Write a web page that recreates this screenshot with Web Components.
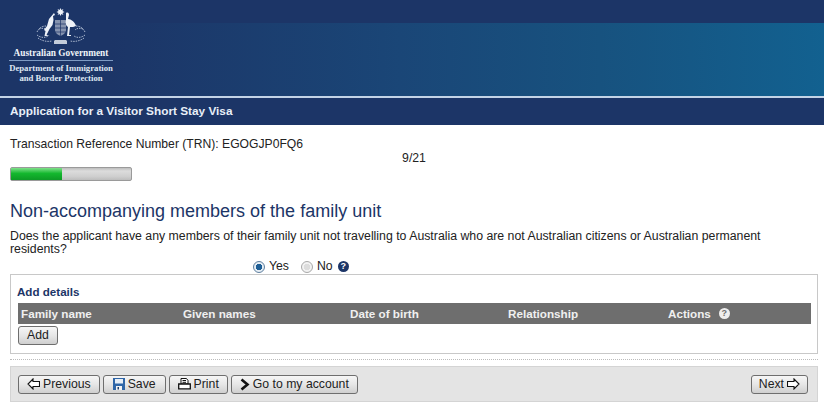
<!DOCTYPE html>
<html lang="en">
<head>
<meta charset="utf-8">
<title>Application for a Visitor Short Stay Visa</title>
<style>
  html, body { margin: 0; background: #fff; }
  body { font: 12.25px/13px "Liberation Sans", Arial, sans-serif; color: #222; height: 410px; overflow: hidden; }
</style>
</head>
<body>
<visa-header></visa-header>
<visa-title>Application for a Visitor Short Stay Visa</visa-title>
<visa-progress trn="EGOGJP0FQ6" step="9" total="21"></visa-progress>
<family-page></family-page>

<script>
const ICONS = {
  previous: '<svg width="13" height="12" viewBox="0 0 13 12"><path d="M6 1 1 6l5 5V8.500h6.500v-5H6z" fill="#fff" stroke="#111" stroke-width="1.100"/></svg>',
  next: '<svg width="13" height="12" viewBox="0 0 13 12"><path d="M7 1l5 5-5 5V8.500H.5v-5H7z" fill="#fff" stroke="#111" stroke-width="1.100"/></svg>',
  save: '<svg width="12" height="12" viewBox="0 0 12 12"><path d="M0 0h12v12H0z" fill="#2f66a8"/><path d="M2 1h8v4.500H2z" fill="#e6eef7"/><path d="M3 8h6v4H3z" fill="#f2f2f2"/><path d="M4.500 9h1.500v2.500H4.500z" fill="#1d3f70"/></svg>',
  print: '<svg width="13" height="12" viewBox="0 0 13 12"><path d="M3 .5h5.500L10 2.500V6H3z" fill="#fff" stroke="#111"/><path d="M.7 6h11.600v4.800H.7z" fill="#fff" stroke="#111" stroke-width="1.300"/><path d="M4.500 2.500h3.500M4.500 4.300h3.500" stroke="#111"/></svg>',
  account: '<svg width="10" height="13" viewBox="0 0 10 13"><path d="M1.500 1.500 7.500 6.500l-6 5" fill="none" stroke="#111" stroke-width="2.600"/></svg>'
};

class VisaHeader extends HTMLElement {
  constructor() {
    super();
    const shadow = this.attachShadow({ mode: 'open' });
    shadow.innerHTML = `
      <style>
        :host { display: block; height: 96px; background: #1c3567; position: relative; overflow: hidden; }
        .band {
          position: absolute; left: 0; right: 0; top: 23px; bottom: 0;
          background: linear-gradient(90deg, #1c3567 110px, #1a4677 400px, #17527f 600px, #126190 824px);
        }
        .logo {
          position: relative; width: 104px; margin-left: 9px; display: flex; flex-direction: column; align-items: center;
          color: #eef3f8; font: bold 8.700px/9.500px "Liberation Serif", "Times New Roman", serif; text-align: center;
        }
        svg { display: block; margin-top: 8px; }
        .gov { margin-top: 3px; font-size: 9.300px; line-height: 10px; padding-bottom: 2px; border-bottom: 1px solid #7f9cc4; width: 104px; margin-bottom: 3px; white-space: nowrap; }
        .dept { white-space: nowrap; color: #dfe7f2; }
      </style>
      <div class="band"></div>
      <div class="logo">
        <svg width="50" height="37" viewBox="0 0 50 37" aria-hidden="true">
          <g fill="none" stroke="#cfd9e8" stroke-width=".8" stroke-dasharray="1.500 1">
            <path d="M1 24c2-4 5-6 9-6M1 27c4 3 8 3 11 1M2 30c4 3 9 4 14 3M3 21c3-1 6-1 8 1"/>
            <path d="M49 24c-2-4-5-6-9-6M49 27c-4 3-8 3-11 1M48 30c-4 3-9 4-14 3M47 21c-3-1-6-1-8 1"/>
          </g>
          <g fill="#eef2f8">
            <path d="M24.500 0l.9 2 2-.9-.9 2 2 .9-2 .9.900 2-2-.9-.9 2-.9-2-2 .9.900-2-2-.9 2-.9-.9-2 2 .9z"/>
            <path d="M18 5l1 2-2 1 .5 4-1 5-3 4-3 6 3 1h-5l1-5-1.500-1 3-4 2-7z"/>
            <path d="M30 5c2-1 3 0 3 2l-1 4c3 0 7 3 8 7-2 1-4 1-6 1l-1 8h2v1h-4l1-9c-2-1-3-4-2-7z"/>
            <path d="M19 12h11v10c0 3-3 5-5.500 6-2.500-1-5.500-3-5.500-6z" opacity=".5"/>
            <path d="M19 32h11l1 1v3H18v-3z" opacity=".8"/>
          </g>
          <g stroke="#1c3567" stroke-width=".7">
            <path d="M24.500 12v16M19 16h11M19 20h11M19 24h11"/>
          </g>
        </svg>
        <div class="gov">Australian Government</div>
        <div class="dept">Department of Immigration<br>and Border Protection</div>
      </div>
    `;
  }
}

class VisaTitle extends HTMLElement {
  constructor() {
    super();
    const shadow = this.attachShadow({ mode: 'open' });
    shadow.innerHTML = `
      <style>
        :host {
          display: block; height: 29px; box-sizing: border-box; padding-left: 10px;
          border-top: 2px solid #c3d3e6; background: #1c3567;
          color: #e8eff8; font: bold 11.800px/27px "Liberation Sans", Arial, sans-serif;
        }
      </style>
      <slot></slot>
    `;
  }
}

class VisaProgress extends HTMLElement {
  constructor() {
    super();
    const shadow = this.attachShadow({ mode: 'open' });
    const step = Number(this.getAttribute('step'));
    const total = Number(this.getAttribute('total'));
    shadow.innerHTML = `
      <style>
        :host { display: block; padding: 13px 10px 0; }
        .trn { font-size: 12.150px; }
        .count { text-align: center; width: 808px; margin-top: 1px; }
        .track {
          width: 120px; height: 12px; margin-top: 2px; border: 1px solid #9a9a9a; border-radius: 2px;
          background: linear-gradient(#bdbdbd, #dcdcdc 25%, #cfcfcf 70%, #bdbdbd);
        }
        .fill { height: 100%; background: linear-gradient(#7fe08a, #14b82e 45%, #0d9a25); }
      </style>
      <div class="trn">Transaction Reference Number (TRN): ${this.getAttribute('trn')}</div>
      <div class="count"><span>${step}/${total}</span></div>
      <div class="track"><div class="fill" style="width:${step / total * 100}%"></div></div>
    `;
  }
}

class NavButton extends HTMLElement {
  constructor() {
    super();
    const shadow = this.attachShadow({ mode: 'open' });
    const icon = ICONS[this.getAttribute('icon')] || '';
    const after = this.hasAttribute('after');
    shadow.innerHTML = `
      <style>
        :host {
          display: inline-flex; align-items: center; gap: 3px; box-sizing: border-box; height: 19px; padding: 0 8px;
          border: 1px solid #6e6e6e; border-radius: 3px; color: #222; white-space: nowrap;
          background: linear-gradient(#f6f6f6, #e6e6e6 50%, #cfcfcf);
        }
        svg { display: block; flex: none; }
      </style>
      ${after ? '' : icon}<slot></slot>${after ? icon : ''}
    `;
  }
}

class RadioOption extends HTMLElement {
  constructor() {
    super();
    const shadow = this.attachShadow({ mode: 'open' });
    const on = this.hasAttribute('checked');
    shadow.innerHTML = `
      <style>
        :host { display: inline-flex; align-items: center; gap: 4px; }
        .dot {
          width: 10px; height: 10px; border-radius: 50%; border: 1px solid ${on ? '#5f7f9f' : '#a8a8a8'};
          background: radial-gradient(circle, ${on ? '#1f5f96 0 3px, #e6eef5 3.500px' : '#dcdcdc 0 3px, #f2f2f2 3.500px'});
        }
      </style>
      <span class="dot"></span><slot></slot>
    `;
  }
}

class HelpIcon extends HTMLElement {
  constructor() {
    super();
    const shadow = this.attachShadow({ mode: 'open' });
    shadow.innerHTML = `
      <style>
        :host {
          display: inline-block; width: 11px; height: 11px; border-radius: 50%;
          background: var(--help-bg, #1c3567); color: var(--help-fg, #fff);
          font: bold 9px/11px "Liberation Sans", Arial, sans-serif; text-align: center;
        }
      </style>?
    `;
  }
}

class DetailsTable extends HTMLElement {
  constructor() {
    super();
    const shadow = this.attachShadow({ mode: 'open' });
    shadow.innerHTML = `
      <style>
        :host { display: block; box-sizing: border-box; height: 80px; padding: 10px 6px 0; border: 1px solid #c8c8c8; }
        h3 { margin: 0 0 5px; font: bold 11.600px/13px "Liberation Sans", Arial, sans-serif; color: #1c3567; }
        .wrap { margin-left: 1px; }
        .head {
          display: grid; grid-template-columns: 162px 167px 158px 160px 1fr; height: 21px; align-items: center;
          background: #6e6e6e; color: #f0f0f0; font-size: 11.700px; font-weight: bold; padding-left: 3px; width: 790px;
        }
        .act { display: flex; align-items: center; gap: 8px; --help-bg: #eee; --help-fg: #6e6e6e; }
        nav-button { margin-top: 2px; }
      </style>
      <h3>Add details</h3>
      <div class="wrap">
        <div class="head">
          <span>Family name</span><span>Given names</span><span>Date of birth</span><span>Relationship</span>
          <span class="act">Actions <help-icon></help-icon></span>
        </div>
        <nav-button>Add</nav-button>
      </div>
    `;
  }
}

class FamilyPage extends HTMLElement {
  constructor() {
    super();
    const shadow = this.attachShadow({ mode: 'open' });
    shadow.innerHTML = `
      <style>
        :host { display: block; padding: 0 6px 0 10px; }
        h1 { margin: 20px 0 8px; font: normal 18px/21px "Liberation Sans", Arial, sans-serif; color: #1c3567; }
        p { margin: 0; width: 790px; font-size: 12.300px; }
        .choice { display: flex; align-items: center; gap: 12px; height: 13px; margin: 4px 0 1px 243px; }
        .choice help-icon { margin-left: -7px; }
        .rule { margin-top: 5px; border-top: 1px dotted #bbb; }
        .bar {
          display: flex; gap: 3px; align-items: center; box-sizing: border-box; height: 36px; margin-top: 6px; padding: 0 7px;
          background: #e4e4e4; border: 1px solid #d4d4d4;
        }
        .spacer { flex: 1; }
        .save { padding: 0 9px; }
        .next { padding: 0 7px; margin-right: 2px; }
      </style>
      <h1>Non-accompanying members of the family unit</h1>
      <p>Does the applicant have any members of their family unit not travelling to Australia who are not Australian citizens or Australian permanent residents?</p>
      <div class="choice">
        <radio-option checked>Yes</radio-option>
        <radio-option>No</radio-option>
        <help-icon></help-icon>
      </div>
      <details-table></details-table>
      <div class="rule"></div>
      <div class="bar">
        <nav-button icon="previous">Previous</nav-button>
        <nav-button class="save" icon="save">Save</nav-button>
        <nav-button icon="print">Print</nav-button>
        <nav-button icon="account">Go to my account</nav-button>
        <span class="spacer"></span>
        <nav-button class="next" icon="next" after>Next</nav-button>
      </div>
    `;
  }
}

customElements.define('visa-header', VisaHeader);
customElements.define('visa-title', VisaTitle);
customElements.define('visa-progress', VisaProgress);
customElements.define('nav-button', NavButton);
customElements.define('radio-option', RadioOption);
customElements.define('help-icon', HelpIcon);
customElements.define('details-table', DetailsTable);
customElements.define('family-page', FamilyPage);
</script>
</body>
</html>
